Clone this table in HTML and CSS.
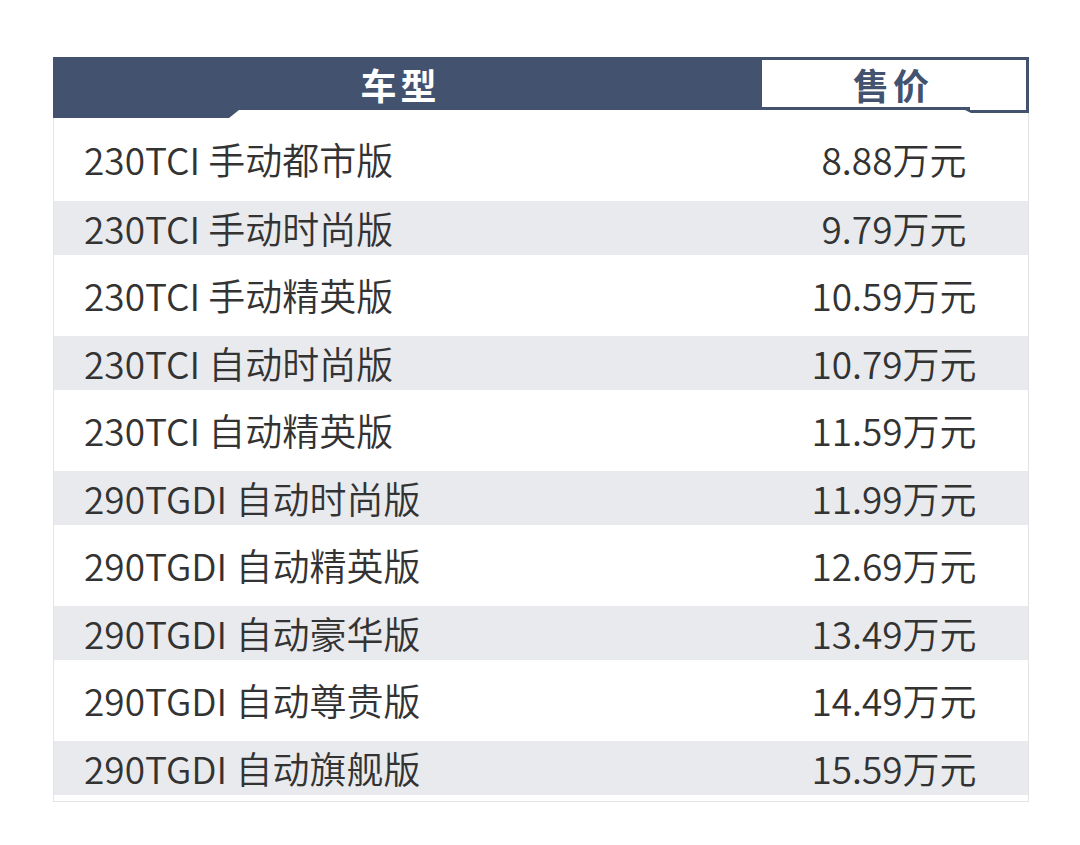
FILE: index.html
```html
<!DOCTYPE html>
<html lang="zh">
<head>
<meta charset="utf-8">
<link rel="stylesheet" href="styles.css">
</head>
<body>
<div class="table">
  <div class="head">
    <div class="head-model">车型</div>
    <div class="head-price">售价</div>
  </div>
  <div class="tabs">
    <div class="tab-left"></div>
    <div class="tab-right"></div>
  </div>
  <div class="body">
    <div class="row"><div class="model">230TCI 手动都市版</div><div class="price">8.88万元</div></div>
    <div class="row alt"><div class="model">230TCI 手动时尚版</div><div class="price">9.79万元</div></div>
    <div class="row"><div class="model">230TCI 手动精英版</div><div class="price">10.59万元</div></div>
    <div class="row alt"><div class="model">230TCI 自动时尚版</div><div class="price">10.79万元</div></div>
    <div class="row"><div class="model">230TCI 自动精英版</div><div class="price">11.59万元</div></div>
    <div class="row alt"><div class="model">290TGDI 自动时尚版</div><div class="price">11.99万元</div></div>
    <div class="row"><div class="model">290TGDI 自动精英版</div><div class="price">12.69万元</div></div>
    <div class="row alt"><div class="model">290TGDI 自动豪华版</div><div class="price">13.49万元</div></div>
    <div class="row"><div class="model">290TGDI 自动尊贵版</div><div class="price">14.49万元</div></div>
    <div class="row alt"><div class="model">290TGDI 自动旗舰版</div><div class="price">15.59万元</div></div>
  </div>
</div>
</body>
</html>
```

FILE: styles.css
```css
* { box-sizing: border-box; }
body {
  margin: 0;
  background: #ffffff;
  font-family: "Noto Sans CJK SC", "Noto Sans", sans-serif;
  color: #333333;
}
.table {
  margin: 57px 0 0 53px;
  width: 976px;
}
.head {
  display: flex;
  height: 53px;
  background: #43526f;
}
.head-model {
  width: 709px;
  display: flex;
  align-items: center;
  justify-content: center;
  padding-right: 14px;
  color: #ffffff;
  font-size: 36px;
  font-weight: 700;
  letter-spacing: 4px;
}
.head-price {
  flex: 1;
  background: #ffffff;
  border: 3px solid #43526f;
  border-left: none;
  display: flex;
  align-items: center;
  justify-content: center;
  color: #43526f;
  font-size: 36px;
  font-weight: 700;
  letter-spacing: 4px;
  padding-right: 2px;
  position: relative;
}
.head-price::before {
  content: "";
  position: absolute;
  right: 0;
  bottom: -3px;
  width: 56px;
  height: 3px;
  background: #ffffff;
}
.tabs {
  display: flex;
  justify-content: space-between;
  height: 8px;
  border-left: 1px solid #e4e4e6;
  border-right: 1px solid #e4e4e6;
}
.tab-left {
  width: 186px;
  height: 8px;
  margin-left: -1px;
  background: #43526f;
  clip-path: polygon(0 0, 100% 0, 176px 100%, 0 100%);
}
.tab-right {
  width: 64px;
  height: 3px;
  margin-right: -1px;
  background: #43526f;
  clip-path: polygon(0 0, 100% 0, 100% 100%, 6px 100%);
}
.body {
  border-left: 1px solid #e4e4e6;
  border-right: 1px solid #e4e4e6;
  border-bottom: 1px solid #e4e4e6;
  padding-bottom: 6px;
}
.row {
  display: flex;
  align-items: center;
  height: 81px;
  font-size: 37px;
  font-weight: 350;
  line-height: 1;
}
.row:first-child {
  height: 83px;
}
.row.alt {
  height: 54px;
  background: #e9eaee;
}
.model {
  width: 708px;
  padding-left: 30px;
  white-space: nowrap;
}
.price {
  flex: 1;
  text-align: center;
  white-space: nowrap;
  padding-right: 2px;
}
```
